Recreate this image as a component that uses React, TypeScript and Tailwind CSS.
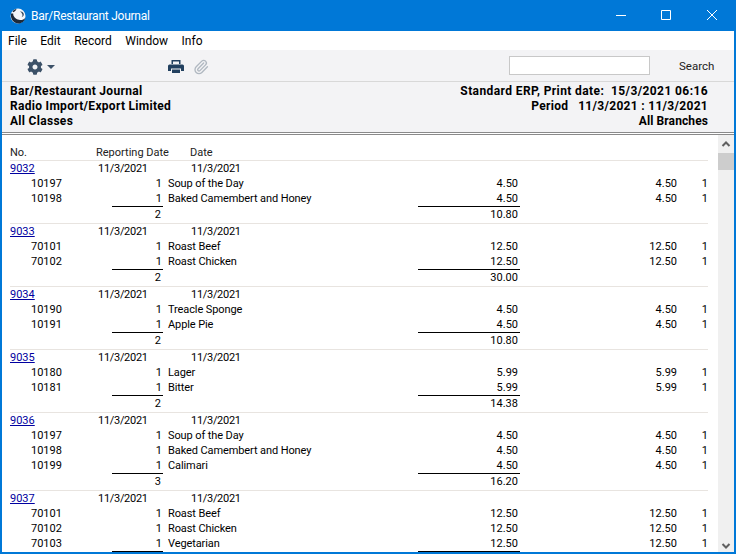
import { FaCog } from "react-icons/fa";
import { Paperclip } from "lucide-react";

interface Line {
  code: string;
  qty: string;
  name: string;
  price: string;
}

interface Entry {
  no: string;
  lines: Line[];
  qty: string;
  total: string;
}

const soup = { qty: "1", name: "Soup of the Day", price: "4.50" };
const camembert = { qty: "1", name: "Baked Camembert and Honey", price: "4.50" };

const entries: Entry[] = [
  {
    no: "9032",
    lines: [
      { code: "10197", ...soup },
      { code: "10198", ...camembert },
    ],
    qty: "2",
    total: "10.80",
  },
  {
    no: "9033",
    lines: [
      { code: "70101", qty: "1", name: "Roast Beef", price: "12.50" },
      { code: "70102", qty: "1", name: "Roast Chicken", price: "12.50" },
    ],
    qty: "2",
    total: "30.00",
  },
  {
    no: "9034",
    lines: [
      { code: "10190", qty: "1", name: "Treacle Sponge", price: "4.50" },
      { code: "10191", qty: "1", name: "Apple Pie", price: "4.50" },
    ],
    qty: "2",
    total: "10.80",
  },
  {
    no: "9035",
    lines: [
      { code: "10180", qty: "1", name: "Lager", price: "5.99" },
      { code: "10181", qty: "1", name: "Bitter", price: "5.99" },
    ],
    qty: "2",
    total: "14.38",
  },
  {
    no: "9036",
    lines: [
      { code: "10197", ...soup },
      { code: "10198", ...camembert },
      { code: "10199", qty: "1", name: "Calimari", price: "4.50" },
    ],
    qty: "3",
    total: "16.20",
  },
  {
    // total row is below the fold in the screenshot, only its rule shows
    no: "9037",
    lines: [
      { code: "70101", qty: "1", name: "Roast Beef", price: "12.50" },
      { code: "70102", qty: "1", name: "Roast Chicken", price: "12.50" },
      { code: "70103", qty: "1", name: "Vegetarian", price: "12.50" },
    ],
    qty: "",
    total: "",
  },
];

function Logo() {
  return (
    <svg viewBox="0 0 16 16" className="h-4 w-4">
      <circle cx="8" cy="8" r="7.5" fill="#f4f6f9" />
      <path d="M1 5.500C.2 10 3 15.500 8.500 15.500c3.500 0 6-2.500 6.800-5.500-1.500 1.600-4 2.500-6.300 1.800C5.500 11 3 8.500 3.200 5.500z" fill="#1d2a3a" />
      <path d="M2.500 3.500C3.500 2 5 1.200 6.500 1c-.5 1.200-1.500 2.500-3 3.200z" fill="#1d2a3a" />
      <path d="M10 3.500c2-.5 4 1 3.800 3-.1 1.300-1 2.300-2.300 2.700 1-1 1.200-2.200.7-3.300C11.800 4.900 11 4 10 3.500z" fill="#33475c" />
    </svg>
  );
}

function PrintIcon() {
  return (
    <svg viewBox="0 0 16 13" className="ml-[113px] mt-[2px] h-[13px] w-[16px]" fill="#22405f">
      <path d="M3.500 0h9v4h-1.500V1.500h-6V4h-1.500z" />
      <path d="M1.500 4.500h13a1.500 1.500 0 011.500 1.500v5h-3V8.500H3V11H0V6a1.500 1.500 0 011.500-1.500z" />
      <path d="M4 9.500h8V13H4z" />
    </svg>
  );
}

function WindowControls() {
  return (
    <div className="flex h-full items-center pb-[1px] text-white">
      <svg viewBox="0 0 10 10" className="mr-[35px] h-[10px] w-[10px]" fill="none" stroke="currentColor">
        <path d="M0 5.500h10" />
      </svg>
      <svg viewBox="0 0 10 10" className="mr-[36px] h-[10px] w-[10px]" fill="none" stroke="currentColor">
        <path d="M.5.500h9v9h-9z" />
      </svg>
      <svg viewBox="0 0 10 10" className="mr-[19px] h-[10px] w-[10px]" fill="none" stroke="currentColor">
        <path d="M0 0l10 10M10 0L0 10" />
      </svg>
    </div>
  );
}

function EntryGroup({ entry }: { entry: Entry }) {
  return (
    <div className="border-t border-[#e8e4e0]">
      <div className="flex h-[15px] items-center leading-[15px]">
        <span className="w-[88px] text-[#0000a0] underline">{entry.no}</span>
        <span className="w-[93px] tracking-[-0.3px]">11/3/2021</span>
        <span className="tracking-[-0.3px]">11/3/2021</span>
      </div>
      {entry.lines.map((line) => (
        <div key={line.code} className="flex h-[15px] items-center leading-[15px]">
          <span className="w-[21px]" />
          <span className="w-[60px]">{line.code}</span>
          <span className="w-[71px] text-right">{line.qty}</span>
          <span className="ml-[6px] w-[200px] whitespace-nowrap tracking-[-0.1px]">{line.name}</span>
          <span className="ml-[-7px] w-[157px] text-right">{line.price}</span>
          <span className="w-[159px] text-right">{line.price}</span>
          <span className="w-[31px] text-right">1</span>
        </div>
      ))}
      <div className="flex h-[17px] leading-[15px]">
        <span className="ml-[102px] h-[16px] w-[51px] border-t border-black pr-[2px] text-right">{entry.qty}</span>
        <span className="ml-[255px] h-[16px] w-[102px] border-t border-black pr-[2px] text-right">{entry.total}</span>
      </div>
    </div>
  );
}

export default function App() {
  return (
    <div className="flex h-[554px] w-[736px] flex-col overflow-hidden border-x-2 border-b-2 border-[#0078d7] bg-white font-['Roboto',sans-serif] text-[11px] text-black">
      <div className="-mx-[2px] flex h-[31px] shrink-0 items-center bg-[#0078d7] pl-[10px] text-white">
        <Logo />
        <span className="ml-[5px] mt-[1px] flex-1 text-[12px] tracking-[-0.25px]">Bar/Restaurant Journal</span>
        <WindowControls />
      </div>

      <div className="flex h-[19px] shrink-0 items-center gap-[13.5px] pl-[6px] pt-[1px] text-[12px]">
        <span>File</span>
        <span>Edit</span>
        <span>Record</span>
        <span>Window</span>
        <span>Info</span>
      </div>

      <div className="flex h-[32px] shrink-0 items-center border-b border-[#d8d8d8] bg-[#f3f3f5] pl-[25px]">
        <FaCog className="mt-[2px] h-[16px] w-[16px] text-[#3c5168]" />
        <span className="ml-[4px] mt-[2px] h-0 w-0 border-x-[4px] border-t-[4px] border-x-transparent border-t-[#3c5168]" />
        <PrintIcon />
        <Paperclip className="ml-[9px] mt-[2px] h-[16px] w-[16px] text-[#b0b8c1]" />
        <div className="ml-[300px] h-[19px] w-[141px] border border-[#c8c8c8] bg-white" />
        <span className="ml-[29px] mt-[2px] text-[11.5px] text-[#222222]">Search</span>
      </div>

      <div className="flex h-[50px] shrink-0 justify-between bg-[#f3f3f5] pl-[8px] pr-[26px] pt-[2px] text-[12px] font-bold leading-[15px]">
        <div className="tracking-[0.3px]">
          <div>Bar/Restaurant Journal</div>
          <div>Radio Import/Export Limited</div>
          <div>All Classes</div>
        </div>
        <div className="text-right">
          <div className="tracking-[0.4px]">Standard ERP, Print date:&nbsp; 15/3/2021 06:16</div>
          <div className="tracking-[0.3px]">Period&nbsp;&nbsp; 11/3/2021 : 11/3/2021</div>
          <div className="tracking-[0.1px]">All Branches</div>
        </div>
      </div>

      <div className="h-[3px] shrink-0 border-y border-[#8a8a8a] bg-white" />

      <div className="flex min-h-0 flex-1">
        <div className="min-w-0 flex-1 overflow-hidden pl-[8px] pr-[10px]">
          <div className="flex h-[25px] items-end leading-[15px] text-[#222222]">
            <span className="w-[86px]">No.</span>
            <span className="w-[94px]">Reporting Date</span>
            <span>Date</span>
          </div>
          {entries.map((entry) => (
            <EntryGroup key={entry.no} entry={entry} />
          ))}
        </div>
        <div className="flex w-[16px] shrink-0 flex-col items-center justify-between bg-[#f0f0f0] pb-[1px] pt-[4px]">
          <div className="flex w-full flex-col">
            <svg viewBox="0 0 16 10" className="h-[10px] w-[16px]" fill="none" stroke="#606060" strokeWidth="2">
              <path d="M4.500 7L8 3.500 11.500 7" />
            </svg>
            <div className="mt-[4px] h-[17px] w-full bg-[#cdcdcd]" />
          </div>
          <svg viewBox="0 0 16 10" className="h-[10px] w-[16px]" fill="none" stroke="#606060" strokeWidth="2">
            <path d="M4.500 3L8 6.500 11.500 3" />
          </svg>
        </div>
      </div>
    </div>
  );
}
